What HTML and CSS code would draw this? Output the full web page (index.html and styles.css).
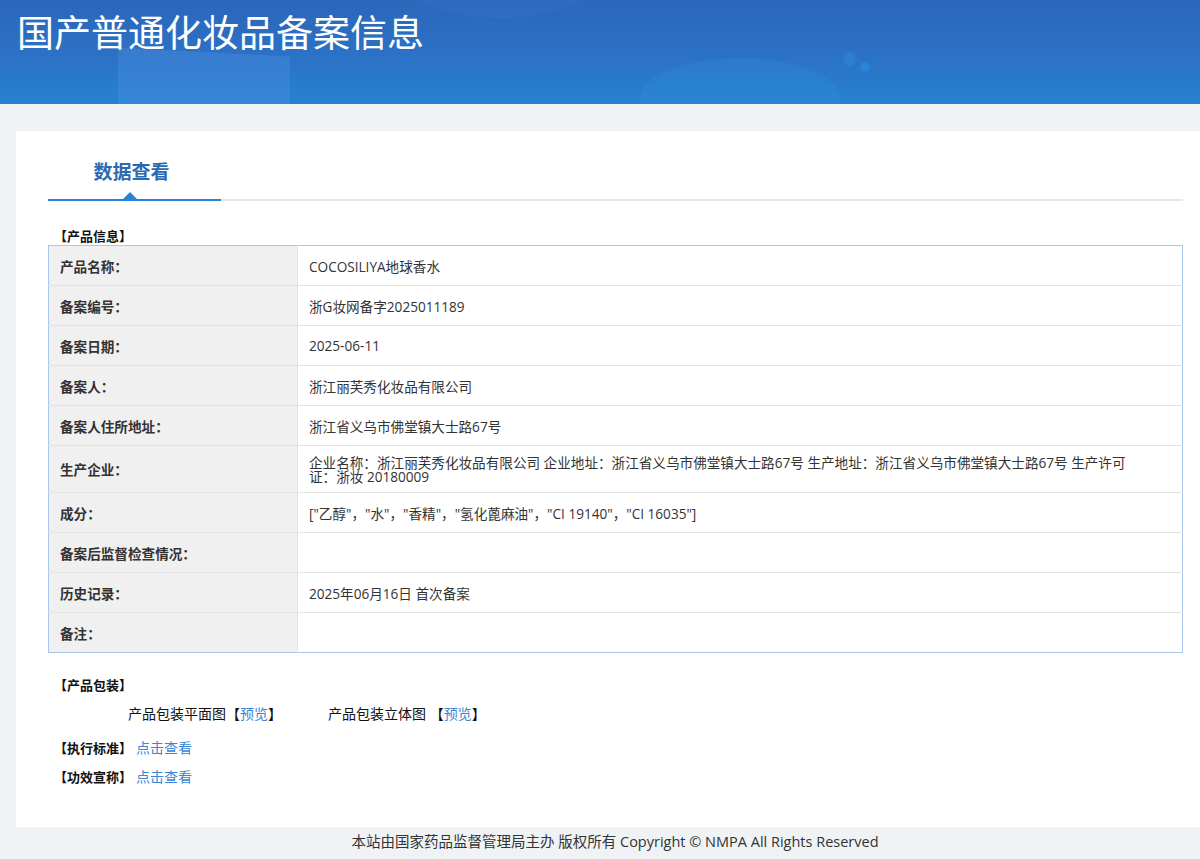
FILE: index.html
```html
<!DOCTYPE html>
<html lang="zh-CN">
<head>
<meta charset="utf-8">
<title>国产普通化妆品备案信息</title>
<link rel="stylesheet" href="styles.css">
</head>
<body>
<header class="banner">
  <span class="deco deco-rect"></span>
  <span class="deco deco-blob"></span>
  <span class="deco deco-dot1"></span>
  <span class="deco deco-dot2"></span>
  <span class="deco deco-arc"></span>
  <h1 class="banner-title">国产普通化妆品备案信息</h1>
</header>
<main class="card">
  <div class="tabs">
    <div class="tab active">数据查看</div>
    <div class="tab-rest"></div>
  </div>

  <div class="section-title">【产品信息】</div>
  <table class="info">
    <tr><th>产品名称：</th><td>COCOSILIYA地球香水</td></tr>
    <tr><th>备案编号：</th><td>浙G妆网备字2025011189</td></tr>
    <tr><th>备案日期：</th><td>2025-06-11</td></tr>
    <tr><th>备案人：</th><td>浙江丽芙秀化妆品有限公司</td></tr>
    <tr><th>备案人住所地址：</th><td>浙江省义乌市佛堂镇大士路67号</td></tr>
    <tr class="tall"><th>生产企业：</th><td class="wrap">企业名称：浙江丽芙秀化妆品有限公司 企业地址：浙江省义乌市佛堂镇大士路67号 生产地址：浙江省义乌市佛堂镇大士路67号 生产许可证：浙妆 20180009</td></tr>
    <tr><th>成分：</th><td>["乙醇"，"水"，"香精"，"氢化蓖麻油"，"CI 19140"，"CI 16035"]</td></tr>
    <tr><th>备案后监督检查情况：</th><td></td></tr>
    <tr><th>历史记录：</th><td>2025年06月16日 首次备案</td></tr>
    <tr><th>备注：</th><td></td></tr>
  </table>

  <div class="section-title pack-title">【产品包装】</div>
  <div class="pack-row">
    <span class="pack-item">产品包装平面图【<a class="link" href="#">预览</a>】</span>
    <span class="pack-item">产品包装立体图 【<a class="link" href="#">预览</a>】</span>
  </div>
  <div class="line-row"><span class="section-title inline">【执行标准】</span><a class="link" href="#">点击查看</a></div>
  <div class="line-row"><span class="section-title inline">【功效宣称】</span><a class="link" href="#">点击查看</a></div>
</main>
<footer class="footer">本站由国家药品监督管理局主办 版权所有 Copyright © NMPA All Rights Reserved</footer>
</body>
</html>
```

FILE: styles.css
```css
* { box-sizing: border-box; }
html, body { margin: 0; padding: 0; }
body {
  background: #eff3f6;
  font-family: "Open Sans", "Noto Sans CJK SC", sans-serif;
  color: #333;
  width: 1200px;
  height: 859px;
  overflow: hidden;
}
.banner {
  position: relative;
  height: 104px;
  overflow: hidden;
  background: linear-gradient(180deg, #2c66b9 0%, #2b72c6 55%, #2682d2 100%);
}
.banner-title {
  position: relative;
  margin: 0;
  padding: 7px 0 0 17px;
  font-family: "Noto Sans CJK SC", sans-serif;
  font-weight: 400;
  font-size: 37px;
  line-height: 48px;
  color: #fff;
}
.deco { position: absolute; display: block; }
.deco-rect {
  left: 118px; top: 52px; width: 172px; height: 60px;
  background: rgba(90, 150, 235, 0.28);
  transform: skewY(3deg);
}
.deco-arc {
  left: 400px; top: -62px; width: 200px; height: 80px;
  border-radius: 50%;
  background: rgba(80, 140, 220, 0.12);
}
.deco-blob {
  left: 640px; top: 58px; width: 200px; height: 80px;
  border-radius: 50% 50% 0 0;
  background: rgba(60, 150, 225, 0.18);
}
.deco-dot1 {
  left: 843px; top: 51px; width: 13px; height: 15px; border-radius: 50%;
  background: rgba(50, 140, 225, 0.45);
  filter: blur(1px);
}
.deco-dot2 {
  left: 860px; top: 62px; width: 10px; height: 10px; border-radius: 50%;
  background: rgba(40, 140, 230, 0.7);
  filter: blur(1px);
}
.card {
  margin: 27px 0 0 16px;
  background: #fff;
  height: 696px;
  padding: 24px 17px 0 32px;
}
.tabs {
  display: flex;
  height: 46px;
  margin-bottom: 26px;
}
.tab {
  position: relative;
  width: 173px;
  text-align: center;
  font-family: "Noto Sans CJK SC", sans-serif;
  font-size: 19px;
  font-weight: 700;
  color: #2c69b3;
  line-height: 32px;
  border-bottom: 2px solid #2a82d6;
  padding-right: 6px;
}
.tab.active::after {
  content: "";
  position: absolute;
  left: 75px;
  bottom: 0;
  width: 0; height: 0;
  border-left: 7px solid transparent;
  border-right: 7px solid transparent;
  border-bottom: 7px solid #2a82d6;
}
.tab-rest {
  flex: 1;
  border-bottom: 2px solid #e6e6e6;
}
.section-title {
  font-size: 13px;
  font-weight: 700;
  color: #111;
  line-height: 18px;
  padding-left: 6px;
}
.info {
  width: 1135px;
  border-collapse: collapse;
  border: 1px solid #a9c6ec;
  font-size: 13.6px;
  margin-top: 0;
}
.info th, .info td {
  height: 40px;
  border-bottom: 1px solid #e3e3e3;
  vertical-align: middle;
}
.info tr:last-child th, .info tr:last-child td { border-bottom: none; }
.info th {
  width: 249px;
  background: #f0f0f0;
  text-align: left;
  font-weight: 700;
  color: #333;
  padding: 0 0 0 11px;
  border-right: 1px solid #e3e3e3;
}
.info td {
  padding: 0 53px 0 11px;
  color: #333;
  font-weight: 400;
}
.info tr.tall th, .info tr.tall td { height: 47px; }
.info td.wrap { line-height: 14px; padding-top: 2px; }
.pack-title { margin-top: 23px; }
.pack-row {
  display: flex;
  padding-left: 80px;
  margin-top: 11px;
  font-size: 14px;
  color: #111;
  line-height: 18px;
}
.pack-item { width: 200px; }
.link { color: #3a86d4; text-decoration: none; font-size: 14px; }
.line-row {
  display: flex;
  align-items: center;
  font-size: 13px;
  line-height: 18px;
  margin-top: 16px;
}
.line-row + .line-row { margin-top: 11px; }
.line-row .inline { margin-right: 4px; }
.footer {
  height: 32px;
  line-height: 30px;
  text-align: center;
  padding-left: 30px;
  font-size: 14.5px;
  color: #333;
}
```
